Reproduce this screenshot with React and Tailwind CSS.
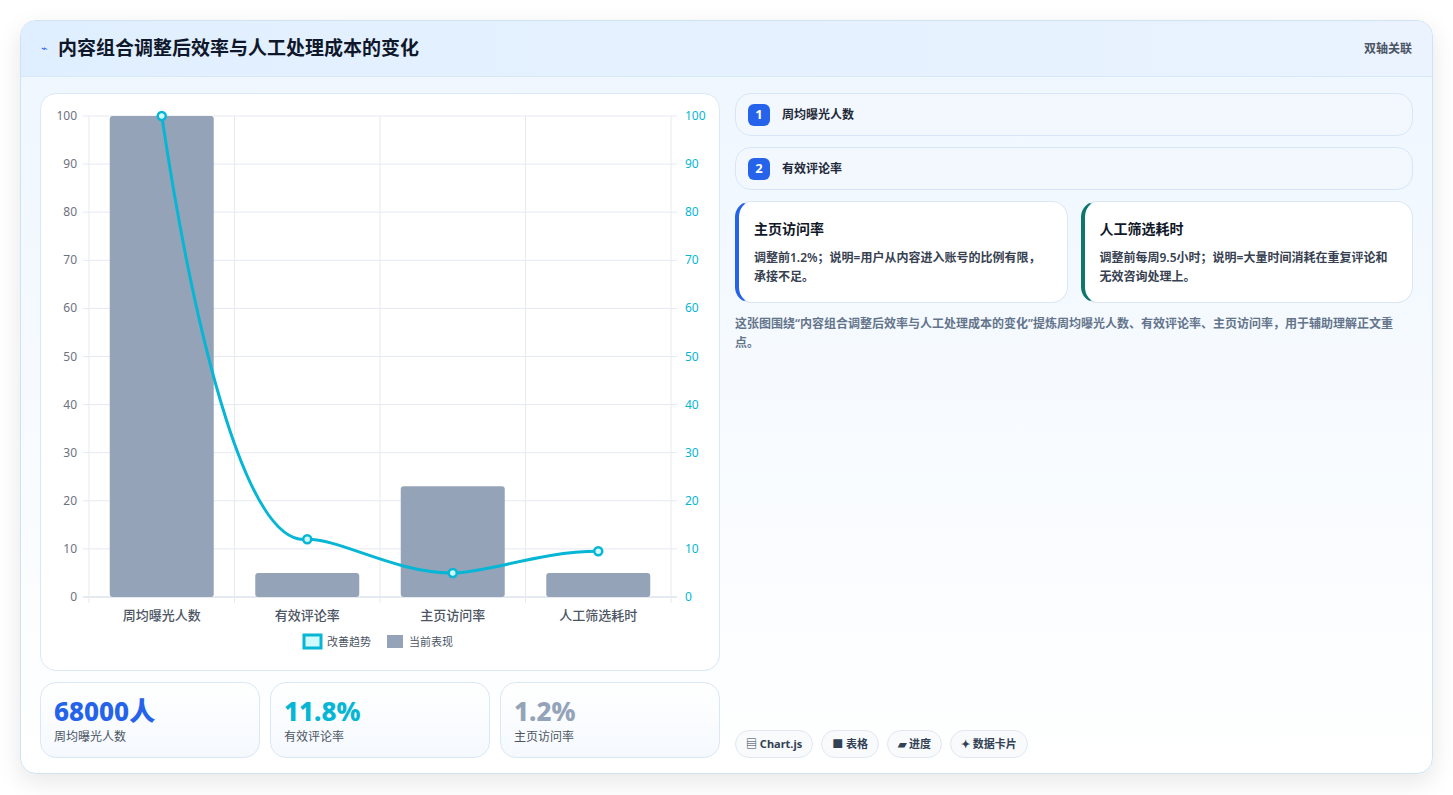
import React from "react";

const FONT = "'Noto Sans', 'Noto Sans CJK SC', sans-serif";

const CATS = ["周均曝光人数", "有效评论率", "主页访问率", "人工筛选耗时"];
const BARS = [100, 5, 23, 5];
const LINE = [100, 12, 5, 9.5];

const X0 = 48, X1 = 630, Y0 = 503, Y1 = 22;
const step = (X1 - X0) / 4;
const cx = (i) => X0 + step * (i + 0.5);
const vy = (v) => Y0 - ((Y0 - Y1) * v) / 100;

function Chart() {
  const pts = LINE.map((v, i) => [cx(i), vy(v)]);
  // simple monotone-ish bezier
  let d = `M${pts[0][0]},${pts[0][1]}`;
  for (let i = 1; i < pts.length; i++) {
    const [x0, y0] = pts[i - 1];
    const [x1, y1] = pts[i];
    const dx = (x1 - x0) * 0.4;
    const c1y = i === 1 ? y0 + (y1 - y0) * 0.55 : y0;
    const c2y = i === 1 ? y1 + 8 : y1;
    d += ` C${x0 + dx * 0.6},${c1y} ${x1 - dx},${c2y} ${x1},${y1}`;
  }
  const ticks = [0, 10, 20, 30, 40, 50, 60, 70, 80, 90, 100];
  return (
    <svg width="680" height="577" viewBox="0 0 680 577" style={{ fontFamily: FONT }}>
      {ticks.map((t) => (
        <g key={t}>
          <line x1={X0 - 6} x2={X1 + 6} y1={vy(t)} y2={vy(t)} stroke={t === 0 ? "#cbd5e1" : "#e5e9f0"} />
          <text x="36" y={vy(t) + 4} textAnchor="end" fontSize="12" fill="#6b7280">{t}</text>
          <text x="644" y={vy(t) + 4} fontSize="12" fill="#06b6d4">{t}</text>
        </g>
      ))}
      {[0, 1, 2, 3, 4].map((i) => (
        <line key={i} x1={X0 + step * i} x2={X0 + step * i} y1={Y1} y2={Y0 + 6} stroke="#e5e9f0" />
      ))}
      {BARS.map((v, i) => (
        <rect key={i} x={cx(i) - 52} y={vy(v)} width="104" height={Y0 - vy(v)} rx="3" fill="#94a3b8" />
      ))}
      <path d={d} fill="none" stroke="#06b6d4" strokeWidth="3" />
      {pts.map(([x, y], i) => (
        <circle key={i} cx={x} cy={y} r="4" fill="#cffafe" stroke="#06b6d4" strokeWidth="2.5" />
      ))}
      {CATS.map((c, i) => (
        <text key={c} x={cx(i)} y="526" textAnchor="middle" fontSize="13" fill="#4b5563" fontWeight="500">{c}</text>
      ))}
      <rect x="263" y="541" width="17" height="13" fill="#cffafe" stroke="#06b6d4" strokeWidth="3" />
      <text x="286" y="552" fontSize="11" fill="#4b5563">改善趋势</text>
      <rect x="346" y="541" width="16" height="13" fill="#94a3b8" />
      <text x="368" y="552" fontSize="11" fill="#4b5563">当前表现</text>
    </svg>
  );
}

function Stat({ value, label, color }) {
  return (
    <div className="flex-1 rounded-2xl border border-[#dbe7f5] bg-gradient-to-b from-white to-[#f5f9fe] px-[13px] pt-[10px] pb-3">
      <div className={`text-[26px] font-extrabold leading-[36px] ${color}`}>{value}</div>
      <div className="text-xs text-[#4b5563]">{label}</div>
    </div>
  );
}

function Step({ n, text }) {
  return (
    <div className="flex h-[43px] items-center gap-3 rounded-2xl border border-[#d6e6f7] bg-[#f3f8ff] px-3">
      <span className="flex h-[22px] w-[22px] items-center justify-center rounded-md bg-[#2563eb] text-[13px] font-bold text-white">{n}</span>
      <span className="text-[12px] font-semibold text-[#1f2937]">{text}</span>
    </div>
  );
}

function Note({ title, body, border }) {
  return (
    <div className={`flex-1 rounded-2xl border border-[#dbe7f5] border-l-4 ${border} bg-white pl-[15px] pr-4 pt-[16px] pb-4`}>
      <div className="mb-[9px] text-[14px] font-bold text-[#111827]">{title}</div>
      <div className="text-[12px] font-semibold leading-[19px] text-[#374151]">{body}</div>
    </div>
  );
}

export default function App() {
  return (
    <div className="min-h-screen bg-white p-5" style={{ fontFamily: FONT }}>
      <div className="flex h-[754px] flex-col overflow-hidden rounded-2xl border border-[#cfe3f2] bg-gradient-to-b from-[#eef6ff] to-white shadow-[0_8px_24px_rgba(15,23,42,0.10)]">
        <div className="flex h-[56px] shrink-0 items-center justify-between border-b border-[#d9e8f6] bg-gradient-to-r from-[#e0efff] to-[#eaf3ff] pl-5 pr-5">
          <div className="flex items-center gap-[10px]">
            <span className="text-[11px] text-[#2563eb]">⌁</span>
            <h1 className="text-[19px] font-bold text-[#0f172a]">内容组合调整后效率与人工处理成本的变化</h1>
          </div>
          <span className="text-[12px] font-semibold text-[#4b5563]">双轴关联</span>
        </div>
        <div className="flex flex-1 gap-[15px] px-[19px] pt-[16px] pb-[18px]">
          <div className="flex w-[680px] flex-col gap-[11px]">
            <div className="h-[578px] rounded-2xl border border-[#dbe7f5] bg-white">
              <Chart />
            </div>
            <div className="flex gap-[10px]">
              <Stat value="68000人" label="周均曝光人数" color="text-[#2563eb]" />
              <Stat value="11.8%" label="有效评论率" color="text-[#06b6d4]" />
              <Stat value="1.2%" label="主页访问率" color="text-[#94a3b8]" />
            </div>
          </div>
          <div className="flex flex-1 flex-col">
            <div className="flex flex-col gap-[11px]">
              <Step n="1" text="周均曝光人数" />
              <Step n="2" text="有效评论率" />
            </div>
            <div className="mt-[11px] flex gap-[13px]">
              <Note title="主页访问率" border="border-l-[#2563eb]" body="调整前1.2%；说明=用户从内容进入账号的比例有限，承接不足。" />
              <Note title="人工筛选耗时" border="border-l-[#0f766e]" body="调整前每周9.5小时；说明=大量时间消耗在重复评论和无效咨询处理上。" />
            </div>
            <p className="mt-[11px] text-[12px] font-semibold leading-[19px] text-[#64748b]">
              这张图围绕“内容组合调整后效率与人工处理成本的变化”提炼周均曝光人数、有效评论率、主页访问率，用于辅助理解正文重点。
            </p>
            <div className="mt-auto flex gap-2">
              {["▤ Chart.js", "■ 表格", "▰ 进度", "✦ 数据卡片"].map((c) => (
                <span key={c} className="rounded-full border border-[#e2e8f0] bg-[#f8fafc] px-[10px] py-[5px] text-[11px] font-bold text-[#334155]">{c}</span>
              ))}
            </div>
          </div>
        </div>
      </div>
    </div>
  );
}
